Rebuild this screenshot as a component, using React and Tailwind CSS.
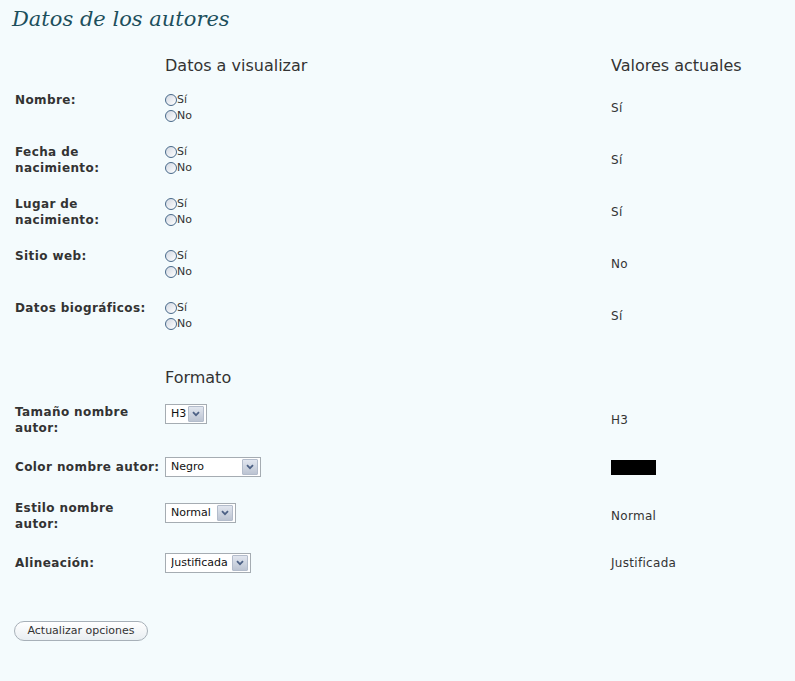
import React from 'react';

const fields = [
  { label: ['Nombre:'], value: 'Sí' },
  { label: ['Fecha de', 'nacimiento:'], value: 'Sí' },
  { label: ['Lugar de', 'nacimiento:'], value: 'Sí' },
  { label: ['Sitio web:'], value: 'No' },
  { label: ['Datos biográficos:'], value: 'Sí' },
];

const Radio = ({ text }) => (
  <label className="flex items-center h-4 text-[11px] leading-4 text-[#333]">
    <span className="inline-block w-3 h-3 rounded-full border border-[#48698a] bg-gradient-to-br from-[#d3d9e3] to-white" />
    {text}
  </label>
);

const Select = ({ value, width }) => (
  <div
    className="flex items-center justify-between h-5 bg-white border border-[#a5acb2] pl-[5px] pr-[2px] text-[11px] text-[#111]"
    style={{ width }}
  >
    <span className="leading-4 whitespace-nowrap overflow-hidden">{value}</span>
    <span className="flex items-center justify-center w-4 h-4 shrink-0 bg-gradient-to-b from-[#e1e6ef] to-[#bcc4d2] border border-[#b3bccb] rounded-[1px]">
      <svg width="8" height="6" viewBox="0 0 8 6">
        <path d="M1 1.2 L4 4.2 L7 1.2" fill="none" stroke="#4d6185" strokeWidth="1.8" />
      </svg>
    </span>
  </div>
);

const Label = ({ lines }) => (
  <div className="text-[12px] leading-4 font-bold tracking-[0.4px] text-[#333]">
    {lines.map((l, i) => (
      <div key={i}>{l}</div>
    ))}
  </div>
);

const App = () => {
  return (
    <div
      className="min-h-[681px] w-[795px] bg-[#f4fbfd] overflow-hidden"
      style={{ fontFamily: '"DejaVu Sans", Verdana, sans-serif' }}
    >
      <h2
        className="pl-3 pt-[5px] text-[21px] leading-7 italic text-[#1d4f5c]"
        style={{ fontFamily: '"DejaVu Serif", Georgia, serif' }}
      >
        Datos de los autores
      </h2>

      <div className="pl-[15px]">
        {/* Encabezado */}
        <div className="grid grid-cols-[150px_446px_1fr] mt-[23px] text-[16px] leading-5 text-[#333]">
          <div />
          <div>Datos a visualizar</div>
          <div>Valores actuales</div>
        </div>

        <div className="flex flex-col gap-5 mt-4">
          {fields.map((f) => (
            <div key={f.label[0]} className="grid grid-cols-[150px_446px_1fr] h-8">
              <Label lines={f.label} />
              <div>
                <Radio text="Sí" />
                <Radio text="No" />
              </div>
              <div className="self-center text-[12px] tracking-[0.3px] text-[#333]">{f.value}</div>
            </div>
          ))}
        </div>

        {/* Formato */}
        <div className="grid grid-cols-[150px_446px_1fr] mt-9 text-[16px] leading-5 text-[#333]">
          <div />
          <div>Formato</div>
        </div>

        <div className="grid grid-cols-[150px_446px_1fr] h-8 mt-4">
          <Label lines={['Tamaño nombre', 'autor:']} />
          <div>
            <Select value="H3" width={42} />
          </div>
          <div className="self-center text-[12px] tracking-[0.3px] text-[#333]">H3</div>
        </div>

        <div className="grid grid-cols-[150px_446px_1fr] h-5 mt-[21px] items-center">
          <Label lines={['Color nombre autor:']} />
          <div>
            <Select value="Negro" width={96} />
          </div>
          <div>
            <div className="w-[45px] h-[15px] bg-black" />
          </div>
        </div>

        <div className="grid grid-cols-[150px_446px_1fr] h-8 mt-[23px]">
          <Label lines={['Estilo nombre', 'autor:']} />
          <div className="pt-[3px]">
            <Select value="Normal" width={71} />
          </div>
          <div className="self-center text-[12px] tracking-[0.3px] text-[#333]">Normal</div>
        </div>

        <div className="grid grid-cols-[150px_446px_1fr] h-5 mt-[21px] items-center">
          <Label lines={['Alineación:']} />
          <div>
            <Select value="Justificada" width={86} />
          </div>
          <div className="text-[12px] tracking-[0.3px] text-[#333]">Justificada</div>
        </div>
      </div>

      <div className="pl-[14px] mt-[44px]">
        <button className="h-5 w-[134px] rounded-full border border-[#a7b0b8] bg-gradient-to-b from-white to-[#e9eef2] text-[11px] text-[#333]">
          Actualizar opciones
        </button>
      </div>
    </div>
  );
};

export default App;
